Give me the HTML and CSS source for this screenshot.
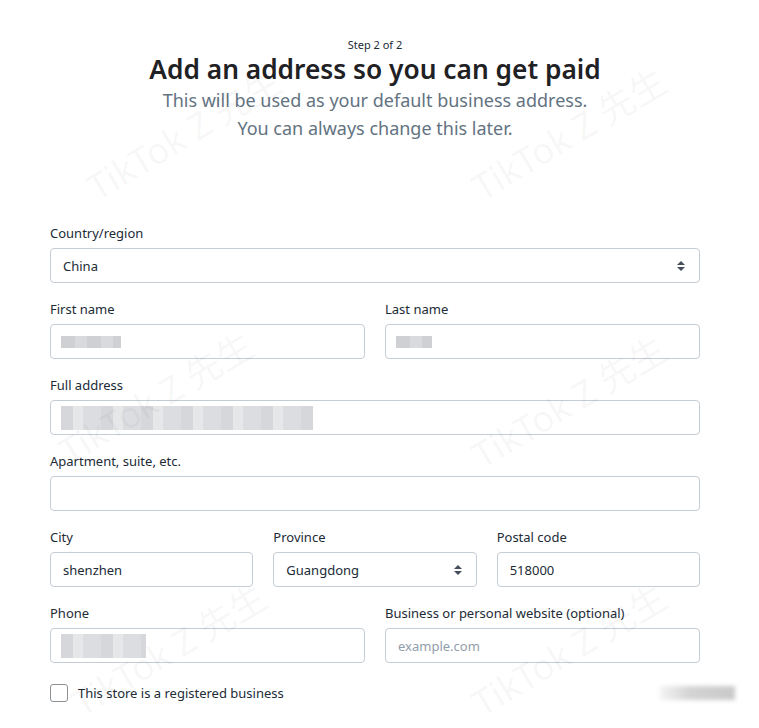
FILE: index.html
```html
<!DOCTYPE html>
<html lang="en">
<head>
  <meta charset="UTF-8" />
  <meta name="viewport" content="width=device-width, initial-scale=1.0" />
  <title>Add an address</title>
  <link rel="stylesheet" href="styles.css">
</head>
<body>
  <div class="page">
    <header class="intro">
      <p class="step">Step 2 of 2</p>
      <h1>Add an address so you can get paid</h1>
      <p class="lead">This will be used as your default business address.<br>You can always change this later.</p>
    </header>

    <form class="form">
      <div class="field">
        <label>Country/region</label>
        <div class="select">China<span class="arrows"></span></div>
      </div>

      <div class="row two">
        <div class="field">
          <label>First name</label>
          <div class="input"><span class="blur" style="width:60px"></span></div>
        </div>
        <div class="field">
          <label>Last name</label>
          <div class="input"><span class="blur" style="width:36px"></span></div>
        </div>
      </div>

      <div class="field">
        <label>Full address</label>
        <div class="input"><span class="blur tall" style="width:252px"></span></div>
      </div>

      <div class="field">
        <label>Apartment, suite, etc.</label>
        <div class="input"></div>
      </div>

      <div class="row three">
        <div class="field">
          <label>City</label>
          <div class="input">shenzhen</div>
        </div>
        <div class="field">
          <label>Province</label>
          <div class="select">Guangdong<span class="arrows"></span></div>
        </div>
        <div class="field">
          <label>Postal code</label>
          <div class="input">518000</div>
        </div>
      </div>

      <div class="row two">
        <div class="field">
          <label>Phone</label>
          <div class="input"><span class="blur tall" style="width:85px"></span></div>
        </div>
        <div class="field">
          <label>Business or personal website (optional)</label>
          <div class="input placeholder">example.com</div>
        </div>
      </div>

      <div class="footer-row">
        <label class="check"><span class="box"></span>This store is a registered business</label>
        <span class="blur-btn"></span>
      </div>
    </form>

    <!-- watermark overlay -->
    <div class="mark" style="left:50px;top:170px">TikTok Z 先生</div>
    <div class="mark" style="left:435px;top:170px">TikTok Z 先生</div>
    <div class="mark" style="left:22px;top:434px">TikTok Z 先生</div>
    <div class="mark" style="left:435px;top:438px">TikTok Z 先生</div>
    <div class="mark" style="left:35px;top:686px">TikTok Z 先生</div>
    <div class="mark" style="left:435px;top:686px">TikTok Z 先生</div>
  </div>
</body>
</html>
```

FILE: styles.css
```css
body {
  margin: 0;
  background: #fff;
  font-family: "Noto Sans", "Noto Sans CJK SC", sans-serif;
  color: #212b36;
  overflow: hidden;
}

.page {
  position: relative;
  width: 650px;
  margin-left: 50px;
  height: 728px;
}

.intro {
  text-align: center;
  padding-top: 37px;
}

.step {
  margin: 0;
  font-size: 11px;
  line-height: 16px;
}

h1 {
  margin: 0;
  font-size: 26.3px;
  line-height: 32px;
  font-weight: 600;
  color: #1f2124;
}

.lead {
  margin: 1px 0 0;
  font-size: 18px;
  line-height: 28px;
  color: #637381;
}

.form {
  margin-top: 82px;
  display: flex;
  flex-direction: column;
  gap: 17px;
}

.row {
  display: grid;
  gap: 20px;
}

.row.two {
  grid-template-columns: 1fr 1fr;
}

.row.three {
  grid-template-columns: 1fr 1fr 1fr;
}

.field {
  display: flex;
  flex-direction: column;
  gap: 6px;
}

.field label {
  font-size: 13px;
  line-height: 18px;
  color: #212b36;
}

.input,
.select {
  position: relative;
  height: 35px;
  box-sizing: border-box;
  border: 1px solid #c4cdd5;
  border-radius: 4px;
  padding: 0 12px;
  display: flex;
  align-items: center;
  font-size: 13px;
  color: #212b36;
}

.placeholder {
  color: #919eab;
}

.arrows {
  position: absolute;
  right: 14px;
  top: 12px;
  width: 0;
  height: 0;
  border-left: 4px solid transparent;
  border-right: 4px solid transparent;
  border-bottom: 4px solid #454f5b;
}

.arrows::after {
  content: "";
  position: absolute;
  left: -4px;
  top: 6px;
  border-left: 4px solid transparent;
  border-right: 4px solid transparent;
  border-top: 4px solid #454f5b;
}

.blur {
  display: block;
  height: 12px;
  margin-left: -2px;
  background: repeating-linear-gradient(90deg, #cfd0d4 0, #cfd0d4 14px, #d9dadd 14px, #d9dadd 26px);
  filter: blur(0.6px);
}

.blur.tall {
  height: 24px;
  background: repeating-linear-gradient(90deg, #d6d7da 0, #d6d7da 12px, #e6e7e9 12px, #e6e7e9 22px, #dcdde0 22px, #dcdde0 40px);
}

.footer-row {
  margin-top: 4px;
  display: flex;
  align-items: center;
  justify-content: space-between;
}

.check {
  display: flex;
  align-items: center;
  gap: 10px;
  font-size: 13px;
  color: #212b36;
}

.box {
  width: 16px;
  height: 16px;
  border: 1px solid #8c9196;
  border-radius: 3px;
}

.blur-btn {
  width: 75px;
  height: 14px;
  margin-right: -35px;
  background: linear-gradient(90deg, #f4f4f4, #d4d4d4 40%, #c9c9c9 100%);
  filter: blur(2px);
}

.mark {
  position: absolute;
  font-size: 36px;
  line-height: 36px;
  color: rgba(0, 0, 0, 0.045);
  transform: rotate(-31deg);
  transform-origin: 0 100%;
  white-space: nowrap;
  pointer-events: none;
}
```
